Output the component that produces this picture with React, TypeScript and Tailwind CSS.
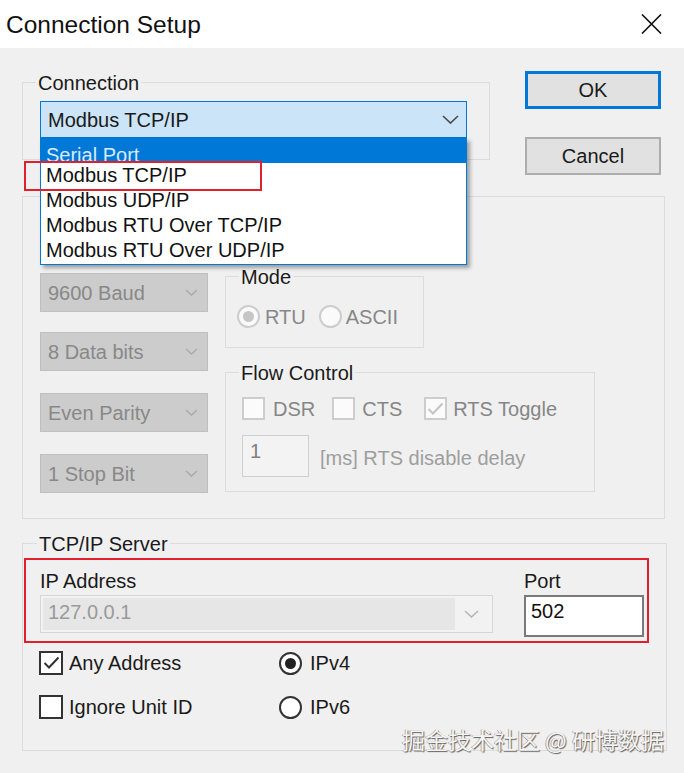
import React from "react";

function Chevron({ w = 16, h = 8, color = "#555555", sw = 1.6 }: { w?: number; h?: number; color?: string; sw?: number }) {
  return (
    <svg width={w} height={h + 2} viewBox={`0 0 ${w} ${h + 2}`}>
      <path d={`M1 1 L${w / 2} ${h} L${w - 1} 1`} fill="none" stroke={color} strokeWidth={sw} />
    </svg>
  );
}

function Check({ checked = false, disabled = false, size = "w-[23px] h-[23px]" }: { checked?: boolean; disabled?: boolean; size?: string }) {
  return (
    <div
      className={`${size} shrink-0 border-2 flex items-center justify-center ${
        disabled ? "border-[#cdcdcd] bg-[#fbfbfb]" : "border-[#333333] bg-white"
      }`}
    >
      {checked && (
        <svg width="17" height="14" viewBox="0 0 17 14">
          <path d="M1.5 7 L6 11.5 L15.5 1.5" fill="none" stroke={disabled ? "#c4c4c4" : "#333333"} strokeWidth="2" />
        </svg>
      )}
    </div>
  );
}

function Radio({ checked = false, disabled = false }: { checked?: boolean; disabled?: boolean }) {
  return (
    <div
      className={`w-[23px] h-[23px] shrink-0 rounded-full border-2 flex items-center justify-center ${
        disabled ? "border-[#cdcdcd] bg-[#fafafa]" : "border-[#333333] bg-white"
      }`}
    >
      {checked && <div className={`w-[11px] h-[11px] rounded-full ${disabled ? "bg-[#c6c6c6]" : "bg-[#222222]"}`} />}
    </div>
  );
}

function DisCombo({ text, className }: { text: string; className: string }) {
  return (
    <div
      className={`${className} w-[168px] h-[39px] bg-[#cccccc] border border-[#bfbfbf] flex items-center justify-between pl-[7px] pr-[9px] text-[#888888]`}
    >
      <span>{text}</span>
      <Chevron w={13} h={6} color="#a9a9a9" sw={1.3} />
    </div>
  );
}

export default function App() {
  return (
    <div className="relative w-[684px] h-[773px] overflow-hidden bg-[#f0f0f0] font-['Liberation_Sans','Arial',sans-serif] text-[20px] leading-[22px] text-[#1a1a1a]">
      {/* Title bar */}
      <div className="h-[48px] bg-white flex items-center justify-between pl-[6px] pr-[22px]">
        <span className="text-[24.5px] leading-[29px] text-[#111111]">Connection Setup</span>
        <svg width="21" height="20" viewBox="0 0 21 20">
          <path d="M1 0.5 L20 19.5 M20 0.5 L1 19.5" stroke="#111111" strokeWidth="1.6" fill="none" />
        </svg>
      </div>

      {/* Top row: Connection group + buttons */}
      <div className="flex items-start">
        <fieldset className="ml-[22px] mt-[23px] w-[468px] border border-[#dcdcdc] pb-[21px]">
          <legend className="ml-[13px] px-[2px] pt-[2px] leading-[20px]">Connection</legend>
          <div className="relative z-10 ml-[17px] mt-[8px] w-[427px] h-[37px] bg-[#cce4f7] border border-[#0078d7] flex items-center justify-between pl-[7px] pr-[7px]">
            <span>Modbus TCP/IP</span>
            <Chevron w={17} h={8} color="#505050" sw={1.7} />
            {/* Dropdown list */}
            <div className="absolute left-[-1px] top-[36px] w-[427px] bg-white border-x border-b border-[#0078d7] shadow-[3px_3px_4px_rgba(0,0,0,0.35)] pb-[1px]">
              <div className="h-[25px] overflow-hidden bg-[#0078d7] text-[#d9eafa] pl-[5px] pt-[5px] leading-[25px]">Serial Port</div>
              <div className="h-[25px] pl-[5px] leading-[25px] text-[#111111]">Modbus TCP/IP</div>
              <div className="h-[25px] pl-[5px] leading-[25px] text-[#111111]">Modbus UDP/IP</div>
              <div className="h-[25px] pl-[5px] leading-[25px] text-[#111111]">Modbus RTU Over TCP/IP</div>
              <div className="h-[25px] pl-[5px] leading-[25px] text-[#111111]">Modbus RTU Over UDP/IP</div>
              <div className="absolute left-[-17px] top-[23px] w-[238px] h-[30px] border-2 border-[#e0202c]" />
            </div>
          </div>
        </fieldset>

        <div className="ml-[35px] mt-[23px] flex flex-col">
          <div className="w-[136px] h-[38px] border-[3px] border-[#0078d7] bg-[#e1e1e1] flex items-center justify-center text-[#1a1a1a]">
            OK
          </div>
          <div className="mt-[28px] w-[136px] h-[38px] border-2 border-[#adadad] bg-[#e1e1e1] flex items-center justify-center text-[#1a1a1a]">
            Cancel
          </div>
        </div>
      </div>

      {/* Serial settings group (label hidden by the dropdown) */}
      <div className="ml-[22px] mt-[21px] w-[643px] h-[323px] border border-[#dcdcdc] flex pl-[17px]">
        <div className="flex flex-col">
          <DisCombo text="9600 Baud" className="mt-[76px]" />
          <DisCombo text="8 Data bits" className="mt-[20px]" />
          <DisCombo text="Even Parity" className="mt-[22px]" />
          <DisCombo text="1 Stop Bit" className="mt-[22px]" />
        </div>
        <div className="ml-[17px] flex flex-col">
          <fieldset className="mt-[68px] w-[199px] h-[83px] border border-[#dcdcdc]">
            <legend className="ml-[13px] px-[2px] pt-[2px] leading-[20px]">Mode</legend>
            <div className="mt-[18px] pl-[11px] flex items-center text-[#888888]">
              <Radio checked disabled />
              <span className="ml-[5px]">RTU</span>
              <div className="ml-[13px]">
                <Radio disabled />
              </div>
              <span className="ml-[4px]">ASCII</span>
            </div>
          </fieldset>
          <fieldset className="mt-[13px] w-[370px] h-[131px] border border-[#dcdcdc]">
            <legend className="ml-[13px] px-[2px] pt-[2px] leading-[20px]">Flow Control</legend>
            <div className="mt-[14px] pl-[16px] flex items-center text-[#868686]">
              <Check disabled />
              <span className="ml-[8px]">DSR</span>
              <div className="ml-[17px]">
                <Check disabled />
              </div>
              <span className="ml-[7px]">CTS</span>
              <div className="ml-[22px]">
                <Check checked disabled />
              </div>
              <span className="ml-[6px]">RTS Toggle</span>
            </div>
            <div className="mt-[15px] pl-[16px] flex items-center">
              <div className="w-[67px] h-[42px] border border-[#cfcfcf] bg-[#f3f3f3] pl-[7px] pt-[4px] text-[#808080]">1</div>
              <span className="ml-[11px] mt-[4px] text-[#9e9e9e]">[ms] RTS disable delay</span>
            </div>
          </fieldset>
        </div>
      </div>

      {/* TCP/IP Server group */}
      <fieldset className="ml-[22px] mt-[13px] w-[645px] h-[219px] border border-[#dcdcdc]">
        <legend className="ml-[14px] px-[2px] pt-[2px] leading-[20px]">TCP/IP Server</legend>
        <div className="ml-[1px] mt-[4px] w-[625px] h-[85px] border-2 border-[#e0202c] flex pl-[14px] pt-[10px]">
          <div className="flex flex-col">
            <span>IP Address</span>
            <div className="mt-[3px] w-[453px] h-[38px] border border-[#d6d6d6] bg-[#f2f2f2] flex items-stretch p-[2px]">
              <div className="w-[412px] bg-[#e6e6e6] pl-[5px] pt-[3px] text-[#9a9a9a]">127.0.0.1</div>
              <div className="flex-1 flex items-center justify-center pr-[2px]">
                <Chevron w={15} h={7} color="#b2b2b2" sw={1.3} />
              </div>
            </div>
          </div>
          <div className="ml-[31px] flex flex-col">
            <span>Port</span>
            <div className="mt-[3px] w-[120px] h-[42px] border-2 border-[#7a7a7a] bg-white pl-[5px] pt-[3px] text-[#111111]">502</div>
          </div>
        </div>
        <div className="ml-[16px] mt-[8px] flex items-center">
          <div className="w-[240px] flex items-center">
            <Check checked size="w-[24px] h-[24px]" />
            <span className="ml-[6px]">Any Address</span>
          </div>
          <Radio checked />
          <span className="ml-[8px]">IPv4</span>
        </div>
        <div className="ml-[16px] mt-[20px] flex items-center">
          <div className="w-[240px] flex items-center">
            <Check size="w-[24px] h-[24px]" />
            <span className="ml-[6px]">Ignore Unit ID</span>
          </div>
          <Radio />
          <span className="ml-[8px]">IPv6</span>
        </div>
      </fieldset>

      {/* Watermark */}
      <div className="absolute right-[20px] bottom-[21px] text-[23px] leading-[26px] text-[#f4f4f4] font-['Noto_Sans_CJK_SC',sans-serif] [text-shadow:1px_1px_1px_rgba(0,0,0,0.6),-1px_0_0_rgba(0,0,0,0.3)]">
        掘金技术社区 @ 研博数据
      </div>
    </div>
  );
}
